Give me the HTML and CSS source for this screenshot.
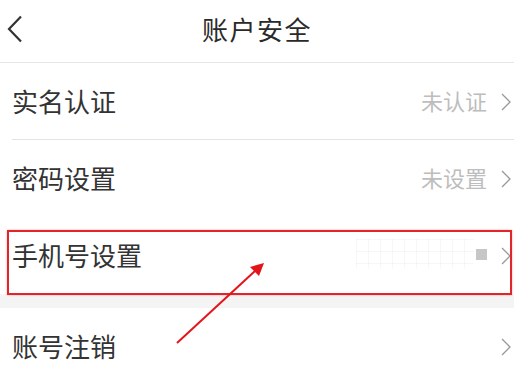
FILE: index.html
```html
<!DOCTYPE html>
<html lang="zh">
<head>
<meta charset="utf-8">
<link rel="stylesheet" href="styles.css">
</head>
<body>
<div class="page">
  <header class="nav">
    <svg class="back" viewBox="0 0 16 28" width="16" height="28"><path d="M14 1.5 L2 14 L14 26.5" fill="none" stroke="#333" stroke-width="2.2"/></svg>
    <h1 class="title">账户安全</h1>
  </header>
  <div class="group">
    <div class="row sep">
      <span class="label">实名认证</span>
      <span class="value">未认证</span>
      <svg class="chev" viewBox="0 0 10 18" width="10" height="18"><path d="M1 1 L9 9 L1 17" fill="none" stroke="#999" stroke-width="1.3"/></svg>
    </div>
    <div class="row">
      <span class="label">密码设置</span>
      <span class="value">未设置</span>
      <svg class="chev" viewBox="0 0 10 18" width="10" height="18"><path d="M1 1 L9 9 L1 17" fill="none" stroke="#999" stroke-width="1.3"/></svg>
    </div>
    <div class="row">
      <span class="label">手机号设置</span>
      <span class="value masked"><span class="blur"></span><span class="dot"></span></span>
      <svg class="chev" viewBox="0 0 10 18" width="10" height="18"><path d="M1 1 L9 9 L1 17" fill="none" stroke="#999" stroke-width="1.3"/></svg>
    </div>
  </div>
  <div class="gap"></div>
  <div class="group">
    <div class="row">
      <span class="label">账号注销</span>
      <span class="value"></span>
      <svg class="chev" viewBox="0 0 10 18" width="10" height="18"><path d="M1 1 L9 9 L1 17" fill="none" stroke="#999" stroke-width="1.3"/></svg>
    </div>
  </div>
  <div class="highlight"></div>
  <svg class="arrow" width="514" height="382" viewBox="0 0 514 382">
    <line x1="177" y1="343" x2="255" y2="271" stroke="#e3141b" stroke-width="2"/>
    <polygon points="264,263 250,267 259,276" fill="#e3141b"/>
  </svg>
</div>
</body>
</html>
```
FILE: styles.css
```css
* { box-sizing: border-box; margin: 0; padding: 0; }
html, body { width: 514px; height: 382px; overflow: hidden; background: #fff; }
body { font-family: "Noto Sans CJK SC", "Noto Sans", sans-serif; color: #333; }
.page { position: relative; width: 514px; height: 382px; }
.nav {
  height: 63px;
  border-bottom: 1px solid #e6e6e6;
  display: flex;
  align-items: center;
  justify-content: center;
  position: relative;
}
.back { position: absolute; left: 7px; top: 15px; }
.title { font-size: 26px; font-weight: 400; color: #2a2a2a; letter-spacing: 1.5px; margin-top: -5px; }
.row {
  height: 77px;
  display: flex;
  align-items: center;
  padding: 0 3px 0 12px;
  position: relative;
}
.row.sep::after {
  content: "";
  position: absolute;
  left: 12px; right: 0; bottom: 0;
  height: 1px;
  background: #e3e3e3;
}
.label { font-size: 26px; color: #333; flex: 1; margin-top: -3px; }
.value { font-size: 22px; color: #bdbdbd; margin-right: 14px; margin-top: -3px; }
.masked { display: flex; align-items: center; height: 30px; }
.blur {
  width: 118px; height: 30px;
  background-image:
    linear-gradient(to right, rgba(0,0,0,0.03) 1px, transparent 1px),
    linear-gradient(to bottom, rgba(0,0,0,0.03) 1px, transparent 1px);
  background-size: 12px 12px;
}
.dot { width: 11px; height: 11px; background: #c6c6c6; margin-left: 2px; }
.chev { display: block; }
.gap { height: 14px; background: #f4f4f4; }
.highlight {
  position: absolute;
  left: 7px; top: 230px;
  width: 505px; height: 65px;
  border: 2px solid #e0252b;
  box-shadow: 0 0 2px rgba(224,37,43,0.4);
}
.arrow { position: absolute; left: 0; top: 0; pointer-events: none; }
```
